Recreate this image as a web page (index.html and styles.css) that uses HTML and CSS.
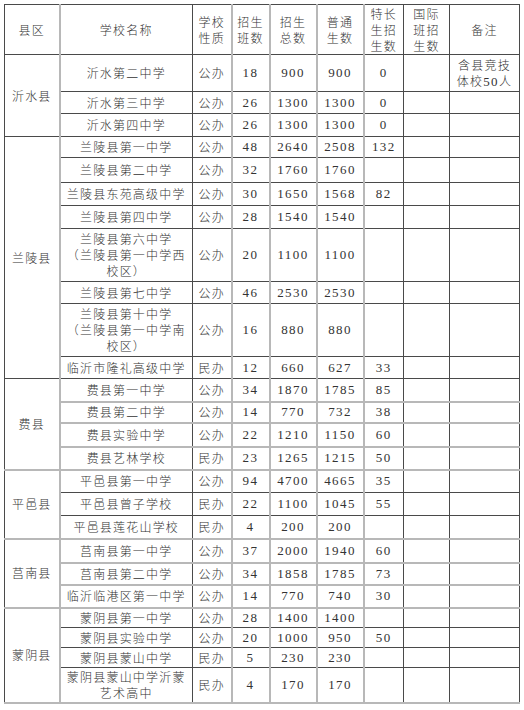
FILE: index.html
```html
<!DOCTYPE html>
<html lang="zh">
<head>
<meta charset="utf-8">
<link rel="stylesheet" href="styles.css">
</head>
<body>
<table class="t">
<colgroup>
<col class="w1 g">
<col class="w2">
<col class="w3 g">
<col class="w4 g">
<col class="w5 g">
<col class="w6 g">
<col class="w7">
<col class="w8">
<col class="w9">
</colgroup>
<tr class="h50 hd">
<td>县区</td><td>学校名称</td><td>学校<br>性质</td><td>招生<br>班数</td><td>招生<br>总数</td><td>普通<br>生数</td><td>特长<br>生招<br>生数</td><td>国际<br>班招<br>生数</td><td>备注</td>
</tr>
<tr class="h37"><td rowspan="3">沂水县</td><td>沂水第二中学</td><td>公办</td><td class="n">18</td><td class="n">900</td><td class="n">900</td><td class="n">0</td><td></td><td class="note">含县竞技<br>体校<span class="n">50</span>人</td></tr>
<tr class="h22"><td>沂水第三中学</td><td>公办</td><td class="n">26</td><td class="n">1300</td><td class="n">1300</td><td class="n">0</td><td></td><td></td></tr>
<tr class="h23"><td>沂水第四中学</td><td>公办</td><td class="n">26</td><td class="n">1300</td><td class="n">1300</td><td class="n">0</td><td></td><td></td></tr>
<tr class="h21"><td rowspan="8">兰陵县</td><td>兰陵县第一中学</td><td>公办</td><td class="n">48</td><td class="n">2640</td><td class="n">2508</td><td class="n">132</td><td></td><td></td></tr>
<tr class="h25"><td>兰陵县第二中学</td><td>公办</td><td class="n">32</td><td class="n">1760</td><td class="n">1760</td><td></td><td></td><td></td></tr>
<tr class="h23"><td>兰陵县东苑高级中学</td><td>公办</td><td class="n">30</td><td class="n">1650</td><td class="n">1568</td><td class="n">82</td><td></td><td></td></tr>
<tr class="h23"><td>兰陵县第四中学</td><td>公办</td><td class="n">28</td><td class="n">1540</td><td class="n">1540</td><td></td><td></td><td></td></tr>
<tr class="h53"><td>兰陵县第六中学<br>（兰陵县第一中学西<br>校区）</td><td>公办</td><td class="n">20</td><td class="n">1100</td><td class="n">1100</td><td></td><td></td><td></td></tr>
<tr class="h22"><td>兰陵县第七中学</td><td>公办</td><td class="n">46</td><td class="n">2530</td><td class="n">2530</td><td></td><td></td><td></td></tr>
<tr class="h53"><td>兰陵县第十中学<br>（兰陵县第一中学南<br>校区）</td><td>公办</td><td class="n">16</td><td class="n">880</td><td class="n">880</td><td></td><td></td><td></td></tr>
<tr class="h22"><td>临沂市隆礼高级中学</td><td>民办</td><td class="n">12</td><td class="n">660</td><td class="n">627</td><td class="n">33</td><td></td><td></td></tr>
<tr class="h23 gl"><td rowspan="4">费县</td><td>费县第一中学</td><td>公办</td><td class="n">34</td><td class="n">1870</td><td class="n">1785</td><td class="n">85</td><td></td><td></td></tr>
<tr class="h21 gl"><td>费县第二中学</td><td>公办</td><td class="n">14</td><td class="n">770</td><td class="n">732</td><td class="n">38</td><td></td><td></td></tr>
<tr class="h24 gl"><td>费县实验中学</td><td>公办</td><td class="n">22</td><td class="n">1210</td><td class="n">1150</td><td class="n">60</td><td></td><td></td></tr>
<tr class="h23"><td>费县艺林学校</td><td>民办</td><td class="n">23</td><td class="n">1265</td><td class="n">1215</td><td class="n">50</td><td></td><td></td></tr>
<tr class="h23 gt"><td rowspan="3">平邑县</td><td>平邑县第一中学</td><td>公办</td><td class="n">94</td><td class="n">4700</td><td class="n">4665</td><td class="n">35</td><td></td><td></td></tr>
<tr class="h23"><td>平邑县曾子学校</td><td>民办</td><td class="n">22</td><td class="n">1100</td><td class="n">1045</td><td class="n">55</td><td></td><td></td></tr>
<tr class="h23"><td>平邑县莲花山学校</td><td>民办</td><td class="n">4</td><td class="n">200</td><td class="n">200</td><td></td><td></td><td></td></tr>
<tr class="h24 gt gl"><td rowspan="3">莒南县</td><td>莒南县第一中学</td><td>公办</td><td class="n">37</td><td class="n">2000</td><td class="n">1940</td><td class="n">60</td><td></td><td></td></tr>
<tr class="h22 gl"><td>莒南县第二中学</td><td>公办</td><td class="n">34</td><td class="n">1858</td><td class="n">1785</td><td class="n">73</td><td></td><td></td></tr>
<tr class="h23 gl"><td>临沂临港区第一中学</td><td>公办</td><td class="n">14</td><td class="n">770</td><td class="n">740</td><td class="n">30</td><td></td><td></td></tr>
<tr class="h20 gt"><td rowspan="4">蒙阴县</td><td>蒙阴县第一中学</td><td>公办</td><td class="n">28</td><td class="n">1400</td><td class="n">1400</td><td></td><td></td><td></td></tr>
<tr class="h20"><td>蒙阴县实验中学</td><td>公办</td><td class="n">20</td><td class="n">1000</td><td class="n">950</td><td class="n">50</td><td></td><td></td></tr>
<tr class="h20"><td>蒙阴县蒙山中学</td><td>民办</td><td class="n">5</td><td class="n">230</td><td class="n">230</td><td></td><td></td><td></td></tr>
<tr class="h35"><td>蒙阴县蒙山中学沂蒙<br>艺术高中</td><td>民办</td><td class="n">4</td><td class="n">170</td><td class="n">170</td><td></td><td></td><td></td></tr>
</table>
</body>
</html>
```
FILE: styles.css
```css
html, body {
  margin: 0;
  padding: 0;
  background: #fff;
}
body {
  padding: 4px 0 0 4px;
}
.t {
  border-collapse: collapse;
  table-layout: fixed;
  width: 515px;
  font-family: "Noto Sans CJK SC", "Liberation Serif", sans-serif;
  font-size: 12px;
  font-weight: 300;
  color: #333;
  border-bottom: 2px solid #b8b8b8;
}
.w1 { width: 55px; }
.w2 { width: 133px; }
.w3 { width: 39px; }
.w4 { width: 38px; }
.w5 { width: 47px; }
.w6 { width: 47px; }
.w7 { width: 40px; }
.w8 { width: 46px; }
.w9 { width: 70px; }
col.g { border-right: 2px solid #b8b8b8; }
.t td {
  border: 1px solid #4a4a4a;
  padding: 0;
  text-align: center;
  vertical-align: middle;
  letter-spacing: 1.2px;
  line-height: 16px;
  white-space: nowrap;
  overflow: hidden;
}
.t td.n, .t .n {
  font-family: "Liberation Serif", serif;
  font-size: 13px;
  font-weight: 400;
  letter-spacing: 1.4px;
}
.hd td { line-height: 16px; }
.note { line-height: 18px; }
.gl td { border-bottom: 2px solid #b8b8b8; }
.gt td { border-top: 2px solid #b8b8b8; }
.h50 { height: 50px; }
.h37 { height: 37px; }
.h35 { height: 35px; }
.h53 { height: 53px; }
.h25 { height: 25px; }
.h24 { height: 24px; }
.h23 { height: 23px; }
.h22 { height: 22px; }
.h21 { height: 21px; }
.h20 { height: 20px; }
```
